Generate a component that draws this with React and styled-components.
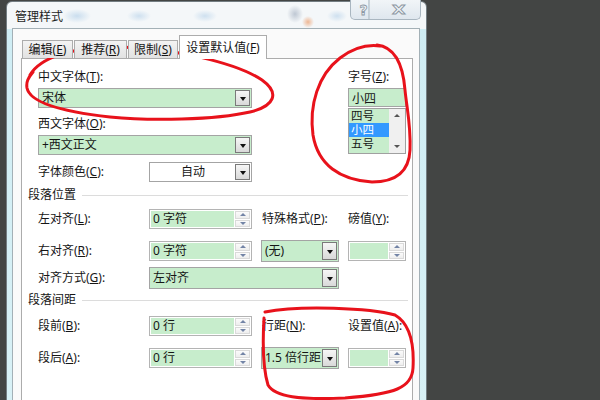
import styled, { createGlobalStyle } from 'styled-components';

const GlobalStyle = createGlobalStyle`
  html, body { margin: 0; padding: 0; }
  body {
    background: #434544;
    font-family: "Noto Sans", "Noto Sans CJK SC", sans-serif;
    color: #161616;
  }
`;

const GREEN = '#c7edcc';

const Page = styled.div`
  position: relative;
  width: 600px;
  height: 400px;
  overflow: hidden;
  background: #434544;
`;

const Window = styled.div`
  margin: 1px 0 0 6px;
  width: 421px;
  height: 440px;
  box-sizing: border-box;
  border: 1px solid #737d82;
  border-radius: 6px 6px 0 0;
  padding: 0 6px 0 5px;
  display: flex;
  flex-direction: column;
  background:
    radial-gradient(ellipse 14px 7px at 70px 14px, rgba(150, 190, 225, 0.45), transparent),
    radial-gradient(ellipse 12px 6px at 132px 14px, rgba(150, 190, 225, 0.4), transparent),
    radial-gradient(ellipse 12px 6px at 198px 14px, rgba(150, 190, 225, 0.4), transparent),
    radial-gradient(ellipse 8px 9px at 288px 12px, rgba(90, 110, 140, 0.35), transparent),
    radial-gradient(ellipse 6px 6px at 301px 20px, rgba(235, 140, 80, 0.6), transparent),
    radial-gradient(ellipse 10px 6px at 330px 14px, rgba(150, 190, 225, 0.4), transparent),
    linear-gradient(to bottom, #f4f7f9 0, #f4f7f9 27px, #cfedf4 27px, #d9f1f6 100%);
`;

const TitleBar = styled.div`
  height: 26px;
  display: flex;
  align-items: center;
  padding-left: 3px;
  font-size: 12px;
  color: #1e1e1e;
  font-family: "Noto Sans CJK SC", sans-serif;
`;

const Controls = styled.div`
  margin-left: auto;
  margin-right: -1px;
  align-self: flex-start;
  margin-top: -2px;
  display: flex;
  height: 19px;
  border: 1px solid #a9b6c0;
  border-top: none;
  border-radius: 0 0 5px 5px;
  overflow: hidden;
  background: linear-gradient(#f1f5f8, #dfe7ee);
`;

const CtrlButton = styled.div`
  width: ${p => p.$w}px;
  display: flex;
  align-items: center;
  justify-content: center;
  font-family: "DejaVu Sans", sans-serif;
  font-weight: bold;
  font-size: ${p => p.$size}px;
  color: #eef2f5;
  -webkit-text-stroke: 0.8px #8c97a2;
  transform: ${p => (p.$wide ? 'scaleX(1.35)' : 'none')};
  & + & { border-left: 1px solid #b7c3cc; }
`;

const Client = styled.div`
  flex: 1;
  border: 1px solid #a3b0b6;
  background: #fafafa;
  display: flex;
  flex-direction: column;
`;

const TabRow = styled.div`
  display: flex;
  align-items: flex-end;
  gap: 1px;
  padding: 6px 0 0 9px;
  position: relative;
  z-index: 1;
`;

const Tab = styled.div`
  width: ${p => p.$w}px;
  height: ${p => (p.$active ? 24 : 18)}px;
  margin-bottom: ${p => (p.$active ? -1 : 0)}px;
  box-sizing: border-box;
  border: 1px solid #acacac;
  border-bottom: none;
  background: ${p => (p.$active ? '#fff' : 'linear-gradient(#f3f3f3, #e2e2e2)')};
  display: flex;
  align-items: center;
  justify-content: center;
  font-size: 12px;
  line-height: 16px;
  white-space: nowrap;
  padding-top: ${p => (p.$active ? 1 : 0)}px;
`;

const Panel = styled.div`
  flex: 1;
  margin: 0 6px 0 8px;
  border: 1px solid #acacac;
  border-bottom: none;
  background: #fff;
  padding-top: 10px;
  display: flex;
  flex-direction: column;
`;

const Label = styled.div`
  font-size: 12px;
  line-height: 16px;
  height: 16px;
  white-space: nowrap;
  margin-top: ${p => p.$mt || 0}px;
  padding-left: ${p => p.$pl || 0}px;
`;

const TopSection = styled.div`
  display: flex;
  padding-left: 16px;
`;

const LeftCol = styled.div`
  width: 214px;
  display: flex;
  flex-direction: column;
`;

const RightCol = styled.div`
  width: 58px;
  margin-left: 96px;
  display: flex;
  flex-direction: column;
`;

const Combo = styled.div`
  width: ${p => p.$w}px;
  height: ${p => p.$h || 20}px;
  margin-top: ${p => p.$mt || 0}px;
  box-sizing: border-box;
  border: 1px solid #a4a4a4;
  padding: 1px;
  display: flex;
  background: ${p => (p.$white ? '#fff' : GREEN)};
`;

const Field = styled.div`
  flex: 1;
  min-width: 0;
  display: flex;
  align-items: center;
  justify-content: ${p => (p.$center ? 'center' : 'flex-start')};
  padding-left: ${p => (p.$center ? 0 : 2)}px;
  font-size: 12px;
  line-height: 16px;
  white-space: nowrap;
  overflow: hidden;
  background: ${p => (p.$white ? '#fff' : GREEN)};
`;

const DropButton = styled.div`
  width: 15px;
  box-sizing: border-box;
  border: 1px solid #7a7a7a;
  background: linear-gradient(#f6f6f6, #d9d9d9);
  display: flex;
  align-items: center;
  justify-content: center;
  &::after {
    content: "";
    border-left: 3.5px solid transparent;
    border-right: 3.5px solid transparent;
    border-top: 4px solid #111;
    margin-top: 1px;
  }
`;

const Spinner = styled.div`
  width: ${p => p.$w}px;
  height: ${p => p.$h || 20}px;
  box-sizing: border-box;
  border: 1px solid #b4b4b4;
  padding: 1px;
  display: flex;
  background: #fff;
`;

const SpinBox = styled.div`
  width: 15px;
  margin-left: 1px;
  display: flex;
  flex-direction: column;
  gap: 1px;
`;

const SpinHalf = styled.div`
  flex: 1;
  box-sizing: border-box;
  border: 1px solid #dadada;
  background: linear-gradient(#fbfbfb, #eeeeee);
  display: flex;
  align-items: center;
  justify-content: center;
  &::after {
    content: "";
    border-left: 3px solid transparent;
    border-right: 3px solid transparent;
    ${p => (p.$down ? 'border-top: 3px solid #7384a6;' : 'border-bottom: 3px solid #7384a6;')}
  }
`;

const TextBox = styled.div`
  height: 19px;
  margin-top: 3px;
  box-sizing: border-box;
  border: 1px solid #a4a4a4;
  background: ${GREEN};
  display: flex;
  align-items: center;
  padding-left: 3px;
  font-size: 12px;
`;

const ListBox = styled.div`
  height: 46px;
  margin-top: 1px;
  box-sizing: border-box;
  border: 1px solid #a0a0a0;
  display: flex;
  background: ${GREEN};
`;

const ListItems = styled.div`
  flex: 1;
  display: flex;
  flex-direction: column;
`;

const ListItem = styled.div`
  height: 14px;
  overflow: hidden;
  display: flex;
  align-items: center;
  font-size: 11.5px;
  line-height: 14px;
  padding-left: 2px;
  background: ${p => (p.$selected ? '#3399ff' : GREEN)};
  color: ${p => (p.$selected ? '#fff' : '#161616')};
`;

const ScrollBar = styled.div`
  width: 16px;
  background: #f0f0f0;
  display: flex;
  flex-direction: column;
  justify-content: space-between;
  align-items: center;
  padding: 5px 0;
`;

const ScrollArrow = styled.div`
  border-left: 3px solid transparent;
  border-right: 3px solid transparent;
  ${p => (p.$down ? 'border-top: 3px solid #555;' : 'border-bottom: 3px solid #555;')}
`;

const ColorRow = styled.div`
  display: grid;
  grid-template-columns: 111px 103px;
  align-items: center;
  height: 20px;
  margin-top: 7px;
`;

const Heading = styled.div`
  display: flex;
  align-items: center;
  padding: 0 4px 0 6px;
  height: 16px;
  margin-top: ${p => p.$mt}px;
  font-size: 12px;
  line-height: 16px;
  &::after {
    content: "";
    flex: 1;
    height: 1px;
    margin-left: 6px;
    background: #dcdcdc;
  }
`;

const Row = styled.div`
  display: grid;
  grid-template-columns: 111px 112px 87px 58px;
  align-items: center;
  padding-left: 16px;
  height: ${p => p.$h}px;
  margin-top: ${p => p.$mt}px;
`;

const Wide = styled.div`
  grid-column: 2 / 4;
`;

const Marks = styled.svg`
  position: absolute;
  left: 0;
  top: 0;
  pointer-events: none;
`;

const U = styled.span`
  text-decoration: underline;
  text-underline-offset: 1px;
`;

function ComboBox({ w, h, mt, white, center, children }) {
  return (
    <Combo $w={w} $h={h} $mt={mt} $white={white}>
      <Field $white={white} $center={center}>{children}</Field>
      <DropButton />
    </Combo>
  );
}

function SpinField({ w, h, children }) {
  return (
    <Spinner $w={w} $h={h}>
      <Field>{children}</Field>
      <SpinBox>
        <SpinHalf />
        <SpinHalf $down />
      </SpinBox>
    </Spinner>
  );
}

export default function App() {
  return (
    <Page>
      <GlobalStyle />
      <Window>
        <TitleBar>
          管理样式
          <Controls>
            <CtrlButton $w={25} $size={14}>?</CtrlButton>
            <CtrlButton $w={43} $size={13} $wide>X</CtrlButton>
          </Controls>
        </TitleBar>
        <Client>
          <TabRow>
            <Tab $w={51}>编辑(<U>E</U>)</Tab>
            <Tab $w={53}>推荐(<U>R</U>)</Tab>
            <Tab $w={50}>限制(<U>S</U>)</Tab>
            <Tab $w={88} $active>设置默认值(<U>F</U>)</Tab>
          </TabRow>
          <Panel>
            <TopSection>
              <LeftCol>
                <Label>中文字体(<U>T</U>):</Label>
                <ComboBox w={214} mt={3}>宋体</ComboBox>
                <Label $mt={8}>西文字体(<U>O</U>):</Label>
                <ComboBox w={214} mt={3}>+西文正文</ComboBox>
                <ColorRow>
                  <Label>字体颜色(<U>C</U>):</Label>
                  <ComboBox w={103} white center>自动</ComboBox>
                </ColorRow>
              </LeftCol>
              <RightCol>
                <Label>字号(<U>Z</U>):</Label>
                <TextBox>小四</TextBox>
                <ListBox>
                  <ListItems>
                    <ListItem>四号</ListItem>
                    <ListItem $selected>小四</ListItem>
                    <ListItem>五号</ListItem>
                  </ListItems>
                  <ScrollBar>
                    <ScrollArrow />
                    <ScrollArrow $down />
                  </ScrollBar>
                </ListBox>
              </RightCol>
            </TopSection>

            <Heading $mt={5}>段落位置</Heading>
            <Row $h={20} $mt={6}>
              <Label>左对齐(<U>L</U>):</Label>
              <SpinField w={103}>0 字符</SpinField>
              <Label $pl={1}>特殊格式(<U>P</U>):</Label>
              <Label>磅值(<U>Y</U>):</Label>
            </Row>
            <Row $h={22} $mt={11}>
              <Label>右对齐(<U>R</U>):</Label>
              <SpinField w={103}>0 字符</SpinField>
              <ComboBox w={78} h={22}>(无)</ComboBox>
              <SpinField w={58}></SpinField>
            </Row>
            <Row $h={22} $mt={5}>
              <Label>对齐方式(<U>G</U>):</Label>
              <Wide>
                <ComboBox w={190} h={22}>左对齐</ComboBox>
              </Wide>
            </Row>

            <Heading $mt={3}>段落间距</Heading>
            <Row $h={20} $mt={8}>
              <Label>段前(<U>B</U>):</Label>
              <SpinField w={103}>0 行</SpinField>
              <Label $pl={1}>行距(<U>N</U>):</Label>
              <Label>设置值(<U>A</U>):</Label>
            </Row>
            <Row $h={22} $mt={11}>
              <Label>段后(<U>A</U>):</Label>
              <SpinField w={103}>0 行</SpinField>
              <ComboBox w={78} h={22}>1.5 倍行距</ComboBox>
              <SpinField w={58}></SpinField>
            </Row>
          </Panel>
        </Client>
      </Window>

      <Marks width="600" height="400" viewBox="0 0 600 400">
        <g fill="none" stroke="#e8121b" strokeWidth="3" strokeLinecap="round" strokeLinejoin="round">
          <path d="M 30,75 C 40,58 70,47 120,47 C 170,48 235,62 262,80 C 280,93 275,106 250,112 C 215,120 150,121 110,117 C 65,112 30,103 27,88 C 26,82 28,78 33,72" />
          <path d="M 377,45 C 395,47 403,65 405,90 C 407,110 411,125 410,150 C 409,172 395,182 372,182 C 340,180 318,165 313,135 C 309,105 318,75 340,58 C 352,49 365,44 380,46" />
          <path d="M 265,312 C 300,305 370,308 395,315 C 412,325 414,350 413,368 C 412,388 395,394 345,398 C 300,400 275,397 268,385 C 262,365 263,335 264,318" />
        </g>
      </Marks>
    </Page>
  );
}
